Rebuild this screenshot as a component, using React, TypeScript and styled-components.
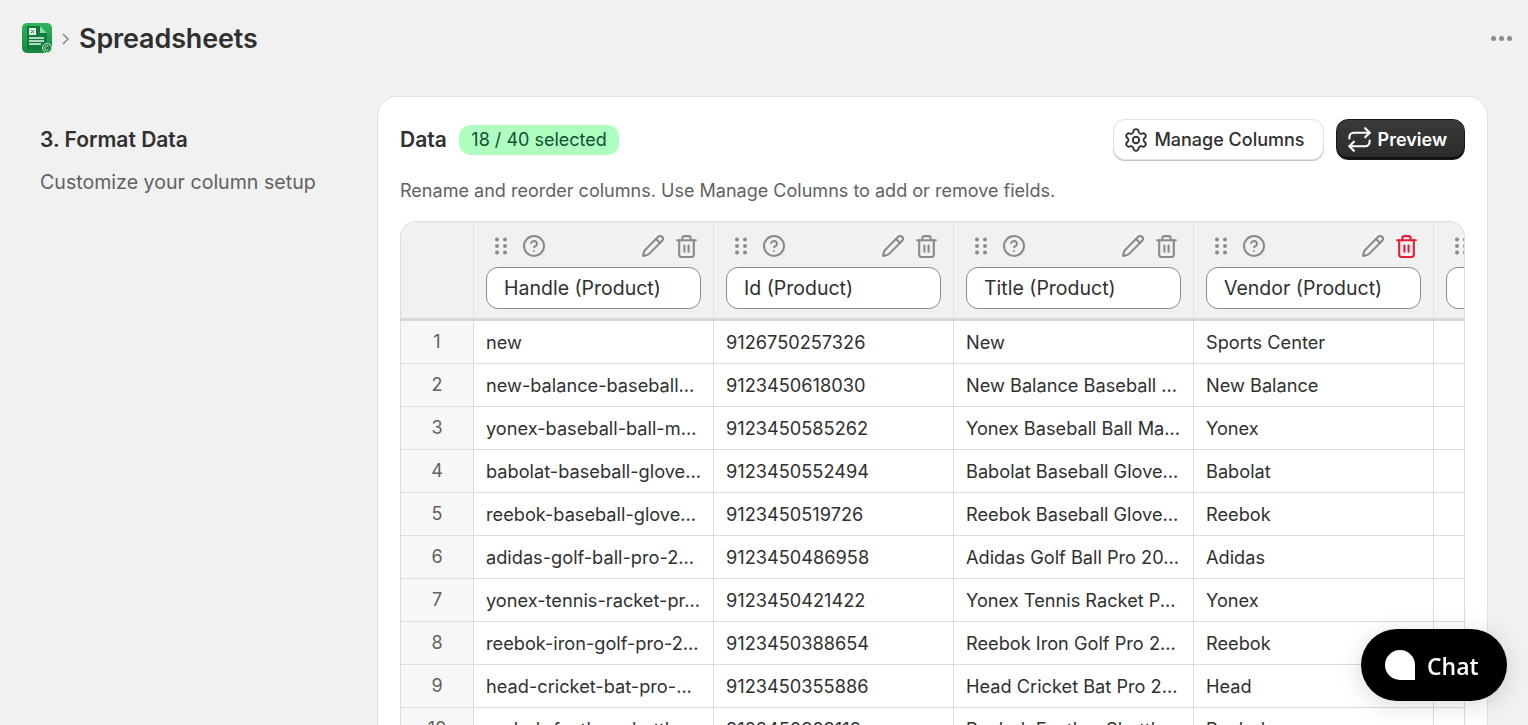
import styled, { createGlobalStyle } from "styled-components";
import { CircleHelp, Pencil, Repeat, Settings, Trash2 } from "lucide-react";

const rows = [
  ["new", "9126750257326", "New", "Sports Center"],
  ["new-balance-baseball...", "9123450618030", "New Balance Baseball ...", "New Balance"],
  ["yonex-baseball-ball-m...", "9123450585262", "Yonex Baseball Ball Ma...", "Yonex"],
  ["babolat-baseball-glove...", "9123450552494", "Babolat Baseball Glove...", "Babolat"],
  ["reebok-baseball-glove...", "9123450519726", "Reebok Baseball Glove...", "Reebok"],
  ["adidas-golf-ball-pro-2...", "9123450486958", "Adidas Golf Ball Pro 20...", "Adidas"],
  ["yonex-tennis-racket-pr...", "9123450421422", "Yonex Tennis Racket P...", "Yonex"],
  ["reebok-iron-golf-pro-2...", "9123450388654", "Reebok Iron Golf Pro 2...", "Reebok"],
  ["head-cricket-bat-pro-...", "9123450355886", "Head Cricket Bat Pro 2...", "Head"],
  ["reebok-feather-shuttle...", "9123450323118", "Reebok Feather Shuttle...", "Reebok"],
];

const columns = ["Handle (Product)", "Id (Product)", "Title (Product)", "Vendor (Product)"];

const GlobalStyle = createGlobalStyle`
  html, body {
    margin: 0;
    height: 725px;
    overflow: hidden;
    background: #f1f1f1;
    font-family: Inter, "Liberation Sans", sans-serif;
    color: #303030;
  }
`;

const Page = styled.div`
  height: 725px;
  overflow: hidden;
`;

const TopBar = styled.header`
  display: flex;
  align-items: center;
  height: 76px;
  padding: 0 16px 0 22px;
  box-sizing: border-box;
`;

const Chevron = styled.svg`
  width: 9px;
  height: 16px;
  margin: 2px 9px 0 9px;
  color: #8a8a8a;
`;

const PageTitle = styled.h1`
  flex: 1;
  margin: 0;
  font-size: 26.9px;
  font-weight: 600;
  color: #303030;
  letter-spacing: -0.1px;
`;

const Dots = styled.div`
  display: flex;
  gap: 3px;
  i {
    width: 5px;
    height: 5px;
    border-radius: 50%;
    background: #8a8a8a;
  }
`;

const Layout = styled.main`
  display: grid;
  grid-template-columns: 337px 1111px;
  padding: 20px 0 0 40px;
`;

const Intro = styled.section`
  padding-top: 31px;
`;

const StepTitle = styled.h2`
  margin: 0 0 16px;
  font-size: 21px;
  line-height: 26px;
  font-weight: 600;
`;

const StepText = styled.p`
  margin: 0;
  font-size: 19.6px;
  line-height: 26px;
  color: #616161;
`;

const Card = styled.section`
  height: 700px;
  box-sizing: border-box;
  padding: 22px 22px 0;
  background: #fff;
  border: 1px solid #e0e0e0;
  border-radius: 20px;
`;

const CardHead = styled.div`
  display: flex;
  align-items: center;
  height: 41px;
`;

const CardTitle = styled.h3`
  margin: 0 12px 0 0;
  font-size: 21px;
  font-weight: 600;
`;

const Badge = styled.span`
  padding: 0 12.5px;
  height: 30px;
  line-height: 30px;
  border-radius: 12px;
  background: #aefebf;
  color: #0c5132;
  font-size: 18px;
`;

const Actions = styled.div`
  display: flex;
  gap: 12px;
  margin-left: auto;
`;

const Button = styled.button<{ $primary?: boolean }>`
  display: flex;
  align-items: center;
  gap: 5px;
  height: 41px;
  box-sizing: border-box;
  padding: 0 ${(p) => (p.$primary ? "17px" : "18px")} 0 9px;
  border-radius: 12px;
  font: ${(p) => (p.$primary ? 600 : 500)} 18px Inter, "Liberation Sans", sans-serif;
  color: ${(p) => (p.$primary ? "#fff" : "#303030")};
  background: ${(p) => (p.$primary ? "linear-gradient(#3a3a3a, #2b2b2b)" : "#fff")};
  border: 1px solid ${(p) => (p.$primary ? "#1a1a1a" : "#e3e3e3")};
  box-shadow: ${(p) => (p.$primary ? "inset 0 -2px 0 #111" : "0 1px 0 #c4c4c4")};
`;

const Hint = styled.p`
  margin: 20px 0 19px;
  font-size: 18.05px;
  line-height: 22px;
  color: #616161;
`;

const Table = styled.div`
  border: 1px solid #dcdcdc;
  border-bottom: 0;
  border-radius: 16px 16px 0 0;
  overflow: hidden;
`;

const HeadRow = styled.div`
  display: flex;
  height: 99px;
  box-sizing: border-box;
  background: #f1f1f1;
  border-bottom: 3px solid #d8d8d8;
`;

const IndexHead = styled.div`
  flex: 0 0 72px;
`;

const HeadCell = styled.div`
  flex: 0 0 240px;
  box-sizing: border-box;
  padding: 9px 12px 0;
  border-left: 1px solid #dcdfe4;
`;

const HeadTools = styled.div`
  display: flex;
  align-items: center;
  height: 30px;
  margin-bottom: 6px;
  padding: 0 2.5px 0 9px;
  color: #8a8a8a;
`;

const GripIcon = styled.svg`
  flex: none;
  width: 12px;
  height: 18px;
  margin-right: 15px;
  fill: currentColor;
`;

const Spacer = styled.span`
  flex: 1;
`;

const Trash = styled(Trash2)<{ $danger?: boolean }>`
  margin-left: 8.5px;
  color: ${(p) => (p.$danger ? "#e51c34" : "#8a8a8a")};
`;

const NameField = styled.div`
  height: 42px;
  line-height: 40px;
  box-sizing: border-box;
  padding: 0 17px;
  background: #fff;
  border: 1px solid #8a8a8a;
  border-radius: 12px;
  font-size: 19.5px;
  white-space: nowrap;
  overflow: hidden;
`;

const Row = styled.div`
  display: flex;
  height: 43px;
  box-sizing: border-box;
  border-bottom: 1px solid #dcdcdc;
`;

const IndexCell = styled.div`
  flex: 0 0 72px;
  text-align: center;
  line-height: 42px;
  font-size: 18px;
  color: #616161;
  background: #f7f7f7;
`;

const Cell = styled.div`
  flex: 0 0 240px;
  box-sizing: border-box;
  padding: 0 11px 0 12px;
  border-left: 1px solid #dcdcdc;
  line-height: 42px;
  font-size: 18.2px;
  white-space: nowrap;
  overflow: hidden;
`;

const ChatButton = styled.button`
  position: fixed;
  left: 1361px;
  top: 629px;
  display: flex;
  align-items: center;
  gap: 12px;
  width: 146px;
  height: 72px;
  padding: 0 0 0 24px;
  box-sizing: border-box;
  border: 0;
  border-radius: 36px;
  background: #000;
  color: #fff;
  font: 600 23px "Open Sans", "Noto Sans", sans-serif;
  box-shadow: 0 4px 24px rgba(0, 0, 0, 0.15);
`;

const ChatBubble = styled.span`
  width: 30px;
  height: 30px;
  background: #fff;
  border-radius: 50% 50% 0 50%;
`;

const ChatLabel = styled.span`
  padding-top: 2px;
`;

const SheetLogo = () => (
  <svg width="30" height="30" viewBox="0 0 30 30">
    <defs>
      <linearGradient id="sheet-bg" x1="0" y1="0" x2="0" y2="1">
        <stop offset="0" stopColor="#2fb45a" />
        <stop offset="1" stopColor="#14863f" />
      </linearGradient>
    </defs>
    <rect width="30" height="30" rx="5" fill="url(#sheet-bg)" />
    <path d="M5 3h13l7 7v17H5z" fill="#127a3a" />
    <path d="M18 3l7 7h-7z" fill="#8fd9a2" />
    <rect x="7" y="5" width="7" height="7" fill="#e8f5ec" />
    <path d="M9 7l3 3M12 7l-3 3" stroke="#127a3a" strokeWidth="1" />
    <path d="M7 15h15M7 18h15M7 21h12" stroke="#e8f5ec" strokeWidth="1.5" />
    <circle cx="25" cy="25" r="4.5" fill="#127a3a" stroke="#d5efdc" strokeWidth="1" />
    <path d="M26.5 23.5a2.2 2.2 0 1 0 0 3" fill="none" stroke="#d5efdc" strokeWidth="1" />
  </svg>
);

const Grip = () => (
  <GripIcon viewBox="0 0 12 18">
    <circle cx="2" cy="2.5" r="2" />
    <circle cx="10" cy="2.5" r="2" />
    <circle cx="2" cy="9" r="2" />
    <circle cx="10" cy="9" r="2" />
    <circle cx="2" cy="15.5" r="2" />
    <circle cx="10" cy="15.5" r="2" />
  </GripIcon>
);

const App = () => (
  <Page>
    <GlobalStyle />
    <TopBar>
      <SheetLogo />
      <Chevron viewBox="0 0 9 16">
        <path d="M2 3l5 5-5 5" fill="none" stroke="currentColor" strokeWidth="1.6" />
      </Chevron>
      <PageTitle>Spreadsheets</PageTitle>
      <Dots>
        <i />
        <i />
        <i />
      </Dots>
    </TopBar>
    <Layout>
      <Intro>
        <StepTitle>3. Format Data</StepTitle>
        <StepText>Customize your column setup</StepText>
      </Intro>
      <Card>
        <CardHead>
          <CardTitle>Data</CardTitle>
          <Badge>18 / 40 selected</Badge>
          <Actions>
            <Button>
              <Settings size={26} strokeWidth={1.7} />
              Manage Columns
            </Button>
            <Button $primary>
              <Repeat size={27} strokeWidth={1.9} />
              Preview
            </Button>
          </Actions>
        </CardHead>
        <Hint>Rename and reorder columns. Use Manage Columns to add or remove fields.</Hint>
        <Table>
          <HeadRow>
            <IndexHead />
            {columns.map((name, i) => (
              <HeadCell key={name}>
                <HeadTools>
                  <Grip />
                  <CircleHelp size={24} strokeWidth={2} />
                  <Spacer />
                  <Pencil size={24} strokeWidth={2} />
                  <Trash size={25} strokeWidth={2} $danger={i === 3} />
                </HeadTools>
                <NameField>{name}</NameField>
              </HeadCell>
            ))}
            <HeadCell>
              <HeadTools>
                <Grip />
              </HeadTools>
              <NameField />
            </HeadCell>
          </HeadRow>
          {rows.map((row, i) => (
            <Row key={row[1]}>
              <IndexCell>{i + 1}</IndexCell>
              {row.map((value) => (
                <Cell key={value}>{value}</Cell>
              ))}
              <Cell />
            </Row>
          ))}
        </Table>
      </Card>
    </Layout>
    <ChatButton>
      <ChatBubble />
      <ChatLabel>Chat</ChatLabel>
    </ChatButton>
  </Page>
);

export default App;
